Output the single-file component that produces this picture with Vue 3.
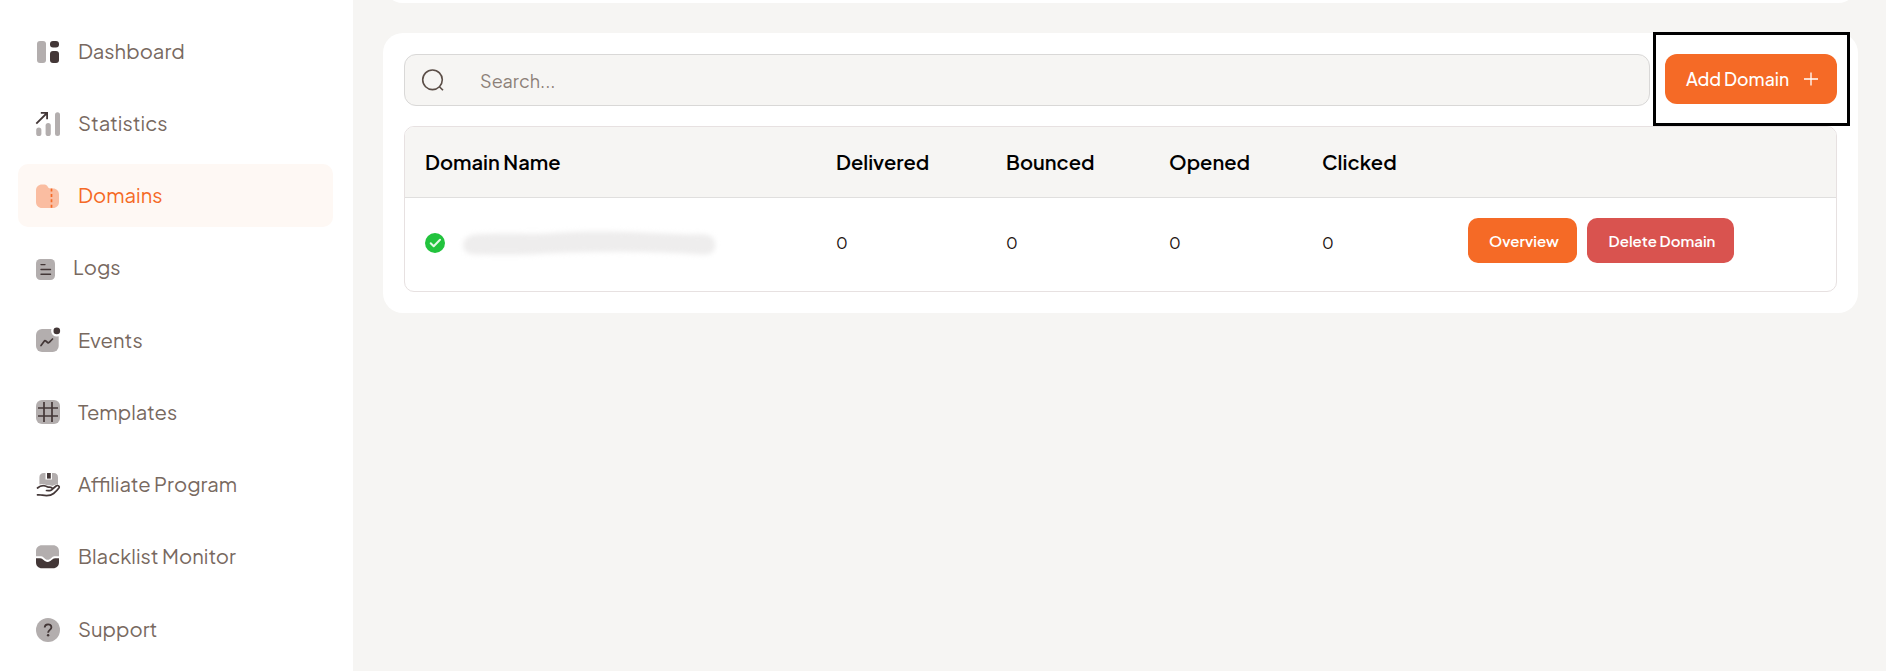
<!-- src/views/Domains.vue -->
<template>
  <div class="layout">
    <aside class="sidebar">
      <nav class="menu">
        <a
          v-for="item in menu"
          :key="item.icon"
          :class="['menu-item', { active: item.icon === current }]"
          @click="current = item.icon"
        >
          <svg v-if="item.icon === 'dashboard'" class="icon" width="24" height="24" viewBox="0 0 24 24">
            <rect class="soft" x="1" y="1" width="9" height="22" rx="3" />
            <rect class="strong" x="14" y="1" width="9" height="6.6" rx="3" />
            <rect class="strong" x="14" y="11" width="9" height="12" rx="3" />
          </svg>
          <svg v-else-if="item.icon === 'statistics'" class="icon" width="24" height="24" viewBox="0 0 24 24">
            <rect class="soft" x="0.2" y="15.5" width="5.2" height="8.5" rx="2.6" />
            <rect class="soft" x="9.6" y="11" width="5.2" height="13" rx="2.6" />
            <rect class="soft" x="19" y="0.3" width="5" height="23.7" rx="2.5" />
            <path class="line" stroke-width="1.8" d="M.3 11.7 11 1M4.8.9h6.3v6.3" />
          </svg>
          <svg v-else-if="item.icon === 'domains'" class="icon" width="24" height="24" viewBox="0 0 24 24">
            <path class="soft" d="M0 6.5C0 3 2.5.5 6 .5h2.5C12 .5 11.300 4.500 14.500 4.500H17c3.500 0 6 2.500 6 6V18c0 3.500-2.500 6-6 6H6c-3.500 0-6-2.500-6-6Z" />
            <path class="line" stroke-width="1.700" stroke-dasharray="3 2.400" d="M15.500 4.500V24" />
          </svg>
          <svg v-else-if="item.icon === 'logs'" class="icon logs" width="19" height="21" viewBox="0 0 19 21">
            <rect class="soft" width="19" height="21" rx="4.500" />
            <path class="line" stroke-width="1.400" d="M5 5.600h4M5 10.500h9.500M5 15.300h9.500" stroke-linecap="round" />
          </svg>
          <svg v-else-if="item.icon === 'events'" class="icon raised" width="24" height="24" viewBox="0 0 24 24">
            <rect class="soft" y="1" width="22.700" height="23" rx="6" />
            <circle cx="20.800" cy="2.900" r="5.700" fill="#fff" />
            <circle class="strong" cx="20.800" cy="2.900" r="3.300" />
            <path class="line" stroke-width="1.700" stroke-linecap="round" stroke-linejoin="round" d="m5 17.500 3.200-4.300c.5-.7 1-.7 1.600-.2l1.800 1.500c.6.5 1.200.4 1.600-.2L16.500 11" />
          </svg>
          <svg v-else-if="item.icon === 'templates'" class="icon raised" width="24" height="24" viewBox="0 0 24 24">
            <rect class="soft" width="24" height="24" rx="6" />
            <path class="line" stroke-width="1.700" d="M8 2v20M16 2v20M2 8h20M2 16h20" />
          </svg>
          <svg v-else-if="item.icon === 'affiliate'" class="icon raised" width="24" height="24" viewBox="0 0 24 24">
            <path class="soft" d="M9.500 0H8C5 0 3.400 1.700 3.400 4.500v6.900c3-1 5-.5 7.600.9 2 .1 3.800 0 5.300.8 2-1.300 3.900-2.300 5.700-1.300V4.500C22 1.700 20.500 0 17.700 0H16v6.500H9.500Z" />
            <path class="strong" d="M11 0h3.800v5.600H11Z" />
            <path class="line" stroke-width="1.700" stroke-linecap="round" stroke-linejoin="round" d="M1.500 15c4-3.600 7.500-2.600 10.200-1 1.100.5 4.600-.3 4.600 1.700 0 1.700-2.200 2-5.800 1.800M16.500 16l3.600-3c1.700-1.200 4 .2 2.800 2-1.300 1.800-3.200 3.800-5.300 5.500-4.300 3.500-9.400 2-12.600 1.500-1.500-.2-2.700-.2-3.500-.1" />
          </svg>
          <svg v-else-if="item.icon === 'blacklist'" class="icon" width="24" height="24" viewBox="0 0 24 24">
            <path class="soft" d="M6 .3h11c3.700 0 6 2.500 6 6v4.900h-4.700c-2.400 0-3.500 3.600-6.600 3.600s-4-3.600-6.500-3.600H0V6.300c0-3.500 2.300-6 6-6Z" />
            <path class="strong" d="M0 13.200h4.200c2.800 0 4 3.700 7.500 3.700 3.400 0 4.500-3.700 7.300-3.700h4v4.100c0 3.500-2.300 6-6 6H6c-3.700 0-6-2.500-6-6Z" />
          </svg>
          <svg v-else class="icon" width="24" height="24" viewBox="0 0 24 24">
            <circle class="soft" cx="12" cy="12" r="12" />
            <path class="line" stroke-width="1.800" d="M8.700 9.600c0-4.400 6.700-4.300 6.700-.4 0 2.600-3.300 2.700-3.300 5.600" />
            <circle class="strong" cx="12.100" cy="17.200" r="1.200" />
          </svg>
          <span class="menu-label">{{ item.label }}</span>
        </a>
      </nav>
    </aside>

    <main class="content">
      <section class="card card-previous"></section>

      <section class="card">
        <div class="toolbar">
          <label class="search">
            <svg width="24" height="24" viewBox="0 0 24 24">
              <circle cx="11.500" cy="11.800" r="9.800" />
              <path d="m18.400 18.700 3.600 3.600" />
            </svg>
            <input v-model="search" type="text" placeholder="Search..." />
          </label>
          <div class="add-wrapper">
            <button class="btn btn-add">
              <span>Add Domain</span>
              <svg width="14" height="14" viewBox="0 0 14 14">
                <path d="M7 0.500v13M0 7h14" />
              </svg>
            </button>
            <div class="highlight"></div>
          </div>
        </div>

        <div class="table-wrapper">
          <table>
            <thead>
              <tr>
                <th class="col-name">Domain Name</th>
                <th class="col-delivered">Delivered</th>
                <th class="col-bounced">Bounced</th>
                <th class="col-opened">Opened</th>
                <th class="col-clicked">Clicked</th>
                <th></th>
              </tr>
            </thead>
            <tbody>
              <tr v-for="domain in domains" :key="domain.id">
                <td>
                  <div class="domain">
                    <svg class="verified" width="20" height="20" viewBox="0 0 20 20">
                      <circle cx="10" cy="10" r="10" />
                      <path d="m5.700 10.300 3 3 6.300-6.500" />
                    </svg>
                    <svg class="hidden-name" width="256" height="28" viewBox="0 0 256 28">
                      <path d="M14 5.500C42 3.500 64 5.500 86 4.500c50-4 92-1 142 1 12 0 24-2 26 8s-6 13-14 12c-56-4-108-3-155-1-24 2-48 1-71 1C-2 25.500-2 7.500 14 5.500Z" />
                    </svg>
                  </div>
                </td>
                <td>{{ domain.delivered }}</td>
                <td>{{ domain.bounced }}</td>
                <td>{{ domain.opened }}</td>
                <td>{{ domain.clicked }}</td>
                <td>
                  <div class="row-actions">
                    <button class="btn btn-small btn-overview">Overview</button>
                    <button class="btn btn-small btn-delete">Delete Domain</button>
                  </div>
                </td>
              </tr>
            </tbody>
          </table>
        </div>
      </section>
    </main>
  </div>
</template>

<script setup>
import { ref } from 'vue';

const current = ref('domains');
const search = ref('');

const menu = [
  { icon: 'dashboard', label: 'Dashboard' },
  { icon: 'statistics', label: 'Statistics' },
  { icon: 'domains', label: 'Domains' },
  { icon: 'logs', label: 'Logs' },
  { icon: 'events', label: 'Events' },
  { icon: 'templates', label: 'Templates' },
  { icon: 'affiliate', label: 'Affiliate Program' },
  { icon: 'blacklist', label: 'Blacklist Monitor' },
  { icon: 'support', label: 'Support' },
];

const domains = ref([
  { id: 1, delivered: 0, bounced: 0, opened: 0, clicked: 0 },
]);
</script>

<style>
body {
  margin: 0;
  overflow: hidden;
}
</style>

<style scoped>
.layout {
  display: flex;
  height: 671px;
  overflow: hidden;
  background: #f6f5f3;
  font-family: "Plus Jakarta Sans", Inter, "Open Sans", sans-serif;
}

/* Sidebar */
.sidebar {
  flex: none;
  width: 353px;
  background: #fff;
}

.menu {
  display: flex;
  flex-direction: column;
  gap: 9.25px;
  padding: 19.7px 20px 0 18px;
}

.menu-item {
  display: flex;
  align-items: center;
  flex: none;
  gap: 18px;
  height: 63px;
  padding-left: 18px;
  border-radius: 10px;
  color: #78695f;
  font-size: 20.2px;
  cursor: pointer;
}

.menu-item.active {
  background: #fef8f4;
  color: #f56a26;
}

.menu-label {
  margin-bottom: 2px;
  white-space: nowrap;
}

.icon {
  flex: none;
  margin-top: 1px;
  overflow: visible;
}

.icon.raised {
  margin-top: 0;
}

.icon.logs {
  margin-top: 4px;
}

.soft {
  fill: #b3aeae;
}

.strong {
  fill: #433737;
}

.line {
  fill: none;
  stroke: #433737;
}

.active .soft {
  fill: #fabda1;
}

.active .line {
  stroke: #f56a26;
}

/* Content */
.content {
  flex: 1;
  padding: 0 28px 0 30px;
}

.card {
  box-sizing: border-box;
  padding: 21px;
  border-radius: 20px;
  background: #fff;
}

.card-previous {
  height: 60px;
  margin: -57px 0 30px;
}

.toolbar {
  display: flex;
  align-items: flex-start;
  gap: 15px;
  margin-bottom: 20px;
}

.search {
  display: flex;
  flex: 1;
  align-items: center;
  gap: 35px;
  box-sizing: border-box;
  height: 52px;
  padding: 0 15px 0 16px;
  border: 1px solid #d9d8d7;
  border-radius: 12px;
  background: #f6f5f3;
}

.search svg {
  flex: none;
  fill: none;
  stroke: #5b4e47;
  stroke-width: 1.6;
}

.search input {
  flex: 1;
  padding: 0;
  border: none;
  outline: none;
  background: none;
  font: inherit;
  font-size: 18px;
}

.search input::placeholder {
  color: #8c8078;
  opacity: 1;
}

.btn {
  border: none;
  color: #fff;
  font-family: inherit;
  white-space: nowrap;
  cursor: pointer;
}

.add-wrapper {
  position: relative;
}

.btn-add {
  display: flex;
  align-items: center;
  justify-content: space-between;
  width: 172px;
  height: 50px;
  padding: 0 19px 0 21px;
  border-radius: 12px;
  background: #f56a26;
  font-size: 17.6px;
  font-weight: 500;
}

.btn-add svg {
  stroke: #fff;
  stroke-width: 1.3;
}

.highlight {
  position: absolute;
  top: -22px;
  left: -12px;
  box-sizing: border-box;
  width: 197px;
  height: 94px;
  border: 3px solid #000;
  pointer-events: none;
}

/* Table */
.table-wrapper {
  overflow: hidden;
  border: 1px solid #e7e1e1;
  border-radius: 10px;
}

table {
  width: 100%;
  border-spacing: 0;
  table-layout: fixed;
}

th,
td {
  box-sizing: border-box;
  padding: 0 20px 2px;
  text-align: left;
}

th {
  height: 71px;
  border-bottom: 1px solid #e0dfde;
  background: #f6f5f3;
  color: #000;
  font-size: 20.1px;
  font-weight: 600;
}

td {
  height: 93px;
  padding-bottom: 4px;
  color: #1c1310;
  font-size: 16px;
}

.col-name { width: 411px; }
.col-delivered { width: 170px; }
.col-bounced { width: 163px; }
.col-opened { width: 153px; }
.col-clicked { width: 146px; }

.domain {
  display: flex;
  align-items: center;
  gap: 16px;
}

.verified circle {
  fill: #22c33d;
}

.verified path {
  fill: none;
  stroke: #e2f8e5;
  stroke-width: 2;
  stroke-linecap: round;
  stroke-linejoin: round;
}

.hidden-name {
  fill: #eeeded;
  filter: blur(2.5px);
}

.row-actions {
  display: flex;
  gap: 10px;
  margin-bottom: 5px;
}

.btn-small {
  height: 45px;
  padding: 0 0 0 3px;
  border-radius: 10px;
  font-size: 15px;
  font-weight: 600;
}

.btn-overview {
  width: 109px;
  background: #f56a26;
}

.btn-delete {
  width: 147px;
  background: #d9534f;
}
</style>
